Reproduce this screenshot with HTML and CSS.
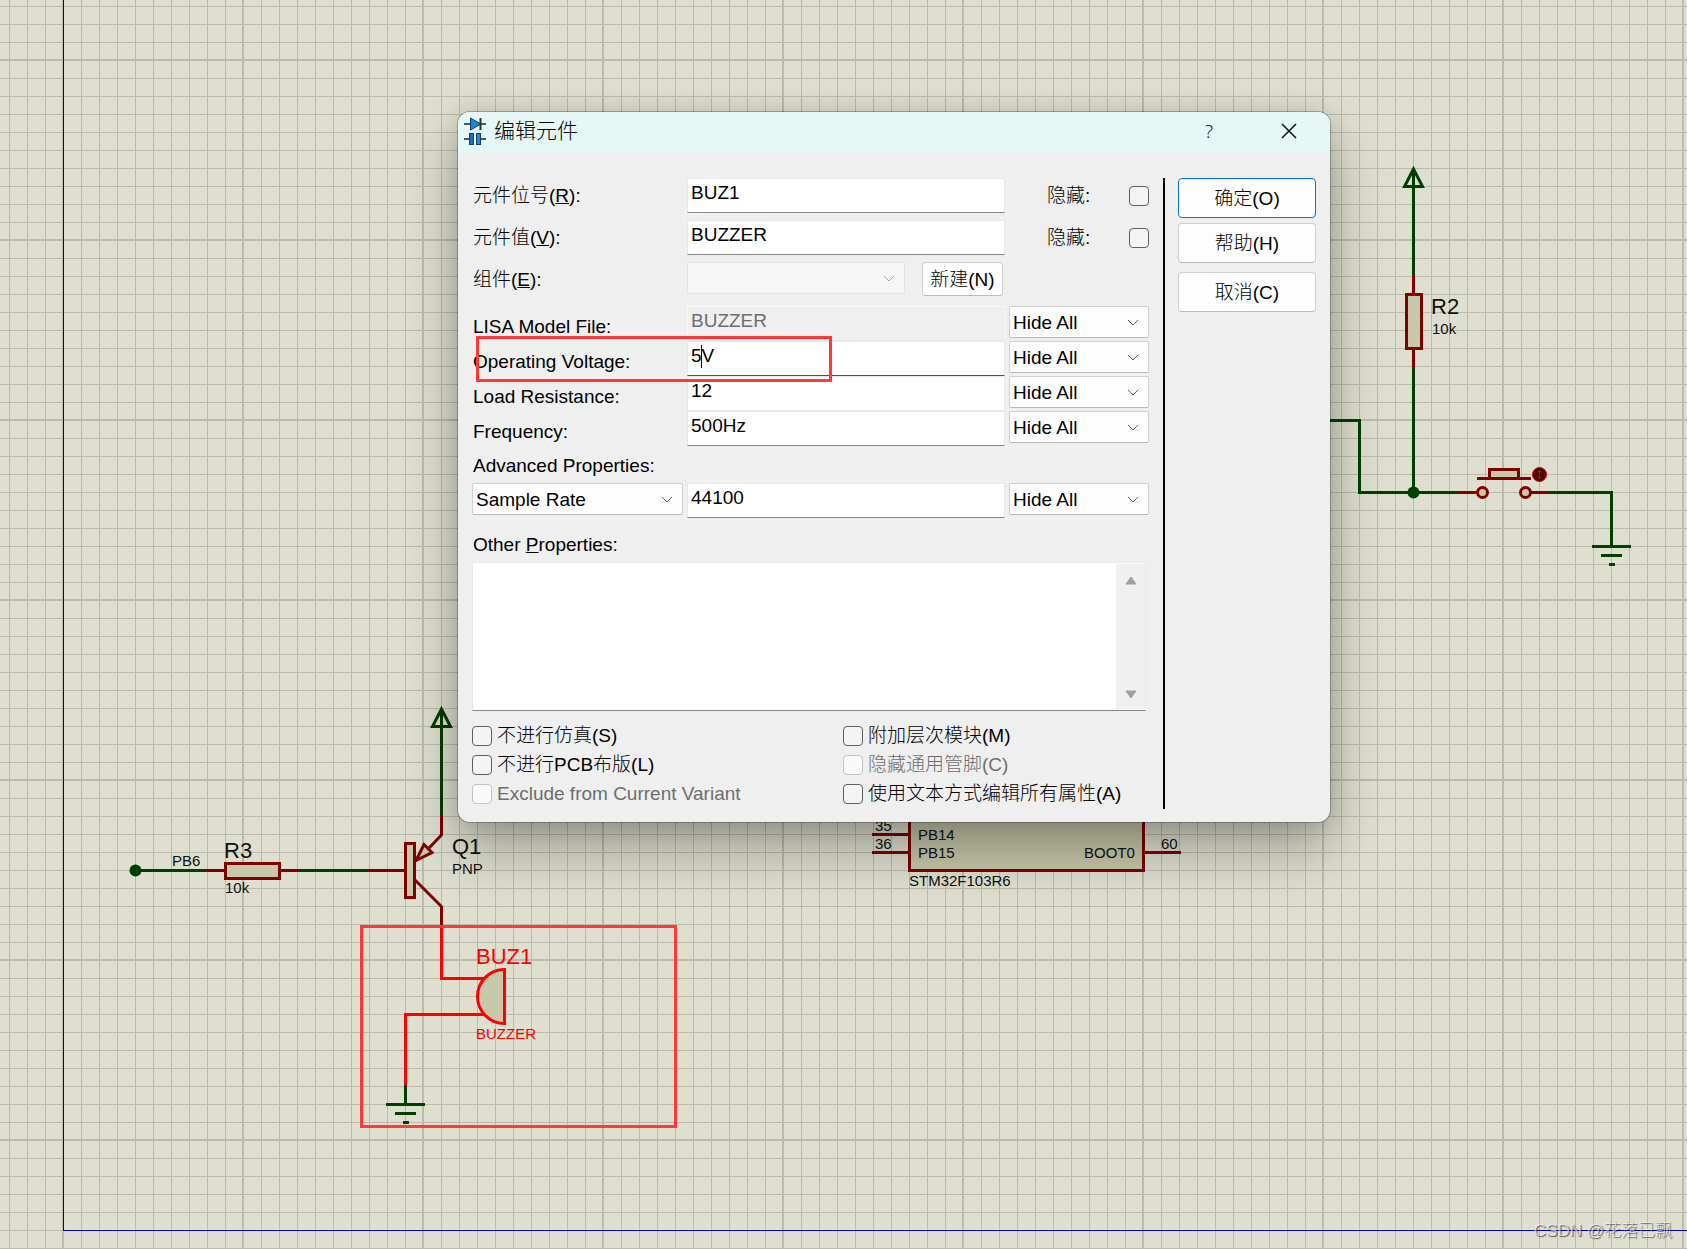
FILE: index.html
```html
<!DOCTYPE html>
<html lang="zh-CN">
<head>
  <meta charset="UTF-8">
  <meta name="viewport" content="width=device-width, initial-scale=1.0">
  <title>编辑元件</title>
  <link rel="stylesheet" href="styles.css">
</head>
<body>
  <main class="canvas">
    <svg class="schematic" width="100%" height="100%">
      <!-- sheet border -->
      <g class="sheet">
        <line x1="63.5" y1="0" x2="63.5" y2="1231"/>
        <line x1="63" y1="1230.5" x2="100%" y2="1230.5"/>
      </g>

      <!-- MCU -->
      <path class="part" d="M909.5 600V870.5H1143.5V600Z"/>
      <path class="pin" d="M872 834.5H909M872 852.5H909M1144 852.5H1181"/>
      <text class="small" x="875" y="831">35</text>
      <text class="small" x="875" y="849">36</text>
      <text class="small" x="918" y="840">PB14</text>
      <text class="small" x="918" y="858">PB15</text>
      <text class="small" x="1084" y="858">BOOT0</text>
      <text class="small" x="1161" y="849">60</text>
      <text class="small" x="909" y="886">STM32F103R6</text>

      <!-- R3 -->
      <path class="wire" d="M135 870.5H206M299 870.5H368"/>
      <path class="pin" d="M206 870.5H225M280 870.5H299M368 870.5H405"/>
      <circle class="node" cx="135.5" cy="870.5" r="6"/>
      <rect class="part" x="225.5" y="863.5" width="54" height="15"/>
      <text class="small" x="172" y="866">PB6</text>
      <text class="big" x="224" y="858">R3</text>
      <text class="small" x="225" y="893">10k</text>

      <!-- Q1 -->
      <path class="wire" d="M441.5 710V815M441.5 709L432.5 726.5H450.5Z"/>
      <path class="pin" d="M441.5 815V835L429 848M415 880L441.5 906.5V926"/>
      <path class="part" d="M416 860.5L424 844.5L432 852.5Z"/>
      <rect class="part" x="405.5" y="843.5" width="9" height="54"/>
      <text class="big" x="452" y="854">Q1</text>
      <text class="small" x="452" y="874">PNP</text>

      <!-- BUZ1 -->
      <path class="selected" d="M441.5 926V978.5H485M485 1014.5H405.5V1085"/>
      <path class="selected body" d="M504.5 969.5A27 27 0 0 0 504.5 1023.5Z"/>
      <path class="wire" d="M405.5 1085V1104.5M386 1104.5H425M395 1113.5H416M403 1122.5H409"/>
      <text class="big hot" x="476" y="964">BUZ1</text>
      <text class="small hot" x="476" y="1039">BUZZER</text>
      <rect class="mark" x="361.5" y="926.5" width="314" height="200"/>

      <!-- R2 -->
      <path class="wire" d="M1320 420.5H1359.5V492.5H1457M1413.5 170V276M1413.5 367V492M1413.5 169L1404.5 186.5H1422.5Z"/>
      <path class="pin" d="M1413.5 275.5V294M1413.5 349V368"/>
      <rect class="part" x="1406.5" y="294.5" width="15" height="54"/>
      <circle class="node" cx="1413.5" cy="492.5" r="6"/>
      <text class="big" x="1431" y="314">R2</text>
      <text class="small" x="1432" y="334">10k</text>

      <!-- push button -->
      <path class="pin" d="M1457 492.5H1478M1530 492.5H1550"/>
      <rect class="part" x="1489.5" y="469.5" width="29" height="9"/>
      <path class="pin" d="M1477 478.5H1531"/>
      <circle class="part" cx="1482.5" cy="492.5" r="5"/>
      <circle class="part" cx="1525.5" cy="492.5" r="5"/>
      <circle class="toggle" cx="1539.5" cy="474.5" r="7"/>
      <path class="toggle" d="M1539.5 470V479M1537.5 472.5L1539.5 470.5L1541.5 472.5M1537.5 476.5L1539.5 478.5L1541.5 476.5"/>
      <path class="wire" d="M1550 492.5H1611.5V546.5M1592 546.5H1631M1601 555.5H1622M1609 564.5H1615"/>
    </svg>

    <section class="dialog" role="dialog" aria-labelledby="dialog-title">
      <header class="titlebar">
        <svg class="app-icon" width="22" height="28" viewBox="0 0 22 28">
          <path d="M0 7H22M0 22H22" stroke="#4a5658" stroke-width="2"/>
          <path d="M6.500 1L17 7L6.500 13Z" fill="#1d82dc" stroke="#153e66"/>
          <path d="M16.500 1V13" stroke="#23373f" stroke-width="2"/>
          <rect x="9" y="16" width="4" height="12" fill="#e5f8f6"/>
          <rect x="5.500" y="16.500" width="4" height="11" fill="#1d6fc0" stroke="#153e66"/>
          <rect x="12.500" y="16.500" width="4" height="11" fill="#2289e0" stroke="#153e66"/>
        </svg>
        <h1 id="dialog-title">编辑元件</h1>
        <button type="button" class="title-btn help">?</button>
        <button type="button" class="title-btn" aria-label="关闭">
          <svg width="16" height="16" viewBox="0 0 16 16"><path d="M1 1L15 15M15 1L1 15" stroke="#111" stroke-width="1.500"/></svg>
        </button>
      </header>

      <form class="content">
        <div class="fields">
          <div class="row spaced">
            <label for="ref">元件位号(<u>R</u>):</label>
            <input id="ref" class="text" type="text" value="BUZ1">
            <label class="hide">隐藏:<input type="checkbox"></label>
          </div>
          <div class="row spaced">
            <label for="value">元件值(<u>V</u>):</label>
            <input id="value" class="text" type="text" value="BUZZER">
            <label class="hide">隐藏:<input type="checkbox"></label>
          </div>
          <div class="row element">
            <label for="element">组件(<u>E</u>):</label>
            <div class="element-pick">
              <select id="element" disabled></select>
              <button type="button">新建(N)</button>
            </div>
          </div>

          <div class="row prop">
            <label for="lisa">LISA Model File:</label>
            <input id="lisa" class="text joined" type="text" value="BUZZER" disabled>
            <select aria-label="LISA Model File"><option>Hide All</option></select>
          </div>
          <div class="row prop">
            <label for="voltage">Operating Voltage:</label>
            <div class="editing">
              <input id="voltage" class="text active" type="text" value="5V">
              <span class="caret"></span>
            </div>
            <select aria-label="Operating Voltage"><option>Hide All</option></select>
          </div>
          <div class="row prop">
            <label for="load">Load Resistance:</label>
            <input id="load" class="text joined" type="text" value="12">
            <select aria-label="Load Resistance"><option>Hide All</option></select>
          </div>
          <div class="row prop">
            <label for="freq">Frequency:</label>
            <input id="freq" class="text" type="text" value="500Hz">
            <select aria-label="Frequency"><option>Hide All</option></select>
          </div>

          <label class="heading" for="advanced">Advanced Properties:</label>
          <div class="row prop">
            <select id="advanced"><option>Sample Rate</option></select>
            <input class="text" type="text" value="44100" aria-label="Sample Rate">
            <select aria-label="Sample Rate"><option>Hide All</option></select>
          </div>

          <label class="heading other" for="other">Other <u>P</u>roperties:</label>
          <div class="memo">
            <textarea id="other"></textarea>
            <div class="scroll">
              <svg width="12" height="9" viewBox="0 0 12 9"><path d="M6 1L11 8H1Z"/></svg>
              <svg width="12" height="9" viewBox="0 0 12 9"><path d="M6 8L11 1H1Z"/></svg>
            </div>
          </div>

          <div class="checks">
            <label><input type="checkbox">不进行仿真(S)</label>
            <label><input type="checkbox">附加层次模块(M)</label>
            <label><input type="checkbox">不进行PCB布版(L)</label>
            <label class="off"><input type="checkbox" disabled>隐藏通用管脚(C)</label>
            <label class="off"><input type="checkbox" disabled>Exclude from Current Variant</label>
            <label><input type="checkbox">使用文本方式编辑所有属性(A)</label>
          </div>
        </div>

        <div class="actions">
          <button type="button" class="default">确定(O)</button>
          <button type="button">帮助(H)</button>
          <button type="button" class="cancel">取消(C)</button>
        </div>
      </form>
      <div class="highlight"></div>
    </section>

    <div class="watermark">CSDN @花落已飘</div>
  </main>
</body>
</html>
```
FILE: styles.css
```css
* {
  margin: 0;
  padding: 0;
  box-sizing: border-box;
}
body {
  font-family: "Liberation Sans", "Noto Sans CJK SC", sans-serif;
  font-size: 19px;
  font-weight: 300;
  color: #000;
}
.canvas {
  position: relative;
  height: 100vh;
  overflow: hidden;
  background-color: #dfdfd0;
  background-image:
    linear-gradient(to right, #bbbbad 1px, transparent 1px),
    linear-gradient(to bottom, #bbbbad 1px, transparent 1px),
    linear-gradient(to right, #bbbbad 1px, transparent 1px),
    linear-gradient(to bottom, #bbbbad 1px, transparent 1px);
  background-size: 18px 18px, 18px 18px, 180px 180px, 180px 180px;
  background-position: 9px 6px, 9px 6px, 62px 59px, 62px 59px;
}

/* schematic */
.schematic {
  position: absolute;
  inset: 0;
  fill: none;
  stroke-width: 3;
}
.sheet {
  stroke: #0000b4;
  stroke-width: 1;
}
.wire {
  stroke: #004000;
}
.pin {
  stroke: #800000;
}
.part {
  stroke: #800000;
  fill: #c8c8aa;
}
.node {
  fill: #004000;
}
.selected {
  stroke: #ff0000;
}
.selected.body {
  fill: #c8c8aa;
}
.toggle {
  stroke: #e00000;
  stroke-width: 1;
  fill: #500000;
}
.mark {
  stroke: #ff3838;
}
.schematic text {
  fill: #101010;
}
.schematic .hot {
  fill: #ff0000;
}
.big {
  font-size: 22px;
}
.small {
  font-size: 15px;
}

/* dialog window */
.dialog {
  position: absolute;
  left: 458px;
  top: 112px;
  width: 872px;
  background: #efefef;
  border-radius: 12px;
  box-shadow: 0 0 0 1px rgba(0, 0, 0, 0.25), 0 2px 24px rgba(0, 0, 0, 0.14), 0 28px 56px rgba(0, 0, 0, 0.3);
}
.titlebar {
  display: flex;
  align-items: center;
  height: 41px;
  padding: 0 5px 3px 6px;
  background: #e5f8f6;
  border-radius: 12px 12px 0 0;
}
.app-icon {
  margin-right: 8px;
}
.titlebar h1 {
  flex: 1;
  font-size: 21px;
  font-weight: 300;
  line-height: 36px;
}
.title-btn {
  display: flex;
  align-items: center;
  justify-content: center;
  width: 72px;
  height: 38px;
  border: none;
  background: none;
}
.title-btn.help {
  width: 88px;
  font: 300 19px "Open Sans", sans-serif;
}

.content {
  display: flex;
  padding: 25px 14px 13px;
}
.fields {
  flex: 1;
  padding-right: 14px;
  margin-right: 13px;
  border-right: 2px solid #000;
}
.row {
  display: grid;
  grid-template-columns: 211px 1fr 140px;
  column-gap: 4px;
  height: 35px;
}
.row > label {
  padding-left: 1px;
  line-height: 35px;
}
.spaced {
  margin-bottom: 7px;
}
.element {
  margin-bottom: 9px;
}
.prop > label {
  line-height: 42px;
}
.text {
  width: 100%;
  height: 35px;
  padding: 0 3px 5px;
  border: 1px solid #e8e8e8;
  border-bottom-color: #868686;
  background: #fff;
  font: inherit;
  color: #000;
}
.text:disabled {
  background: #efefef;
  border-color: #f9f9f9;
  color: #6d6d6d;
}
.text.joined {
  border-bottom-color: #e8e8e8;
}
.text.active {
  border-bottom: 1px solid #0067c0;
}
.editing {
  position: relative;
}
.caret {
  position: absolute;
  left: 14px;
  top: 4px;
  width: 1px;
  height: 23px;
  background: #000;
}
.row > .hide {
  display: flex;
  align-items: center;
  justify-content: space-between;
  padding-left: 38px;
}

select {
  appearance: none;
  height: 32px;
  width: 100%;
  padding: 0 3px;
  border: 1px solid #d0d0d0;
  border-bottom-color: #b8b8b8;
  border-radius: 2px;
  background: #fdfdfd url("data:image/svg+xml,%3Csvg xmlns='http://www.w3.org/2000/svg' width='12' height='7'%3E%3Cpath d='M1 1L6 6L11 1' fill='none' stroke='%23606060'/%3E%3C/svg%3E") no-repeat right 9px center;
  font: inherit;
  color: #000;
}
select:disabled {
  border-color: #dadada;
  opacity: 0.5;
}
.element-pick {
  display: flex;
  align-items: flex-start;
  gap: 17px;
  padding-right: 2px;
}
.element-pick select {
  flex: 1;
}
.element-pick button {
  width: 81px;
  height: 34px;
}

.content button {
  padding-bottom: 3px;
  border: 1px solid #d0d0d0;
  border-bottom-color: #bababa;
  border-radius: 4px;
  background: #fdfdfd;
  font: inherit;
  color: #000;
}
.heading {
  display: block;
  height: 37px;
  padding-left: 1px;
  line-height: 39px;
}
.heading.other {
  height: 44px;
  line-height: 53px;
}
.memo {
  display: flex;
  height: 149px;
  margin: 0 3px 15px 0;
  border: 1px solid #e8e8e8;
  border-bottom-color: #868686;
  background: #fff;
}
.memo textarea {
  flex: 1;
  border: none;
  resize: none;
  font: inherit;
}
.scroll {
  display: flex;
  flex-direction: column;
  align-items: center;
  justify-content: space-between;
  width: 29px;
  margin: 1px 0;
  padding: 12px 0 10px;
  background: #f0f0f0;
}
.scroll path {
  fill: #a0a0a0;
  stroke: #a0a0a0;
  stroke-linejoin: round;
}

.checks {
  display: grid;
  grid-template-columns: 371px 1fr;
  grid-auto-rows: 20px;
  row-gap: 9px;
  margin-bottom: 5px;
}
.checks label {
  display: flex;
  align-items: center;
  gap: 5px;
  line-height: 20px;
}
.checks .off {
  color: #6d6d6d;
}
input[type="checkbox"] {
  appearance: none;
  width: 20px;
  height: 20px;
  border: 1px solid #5f5f5f;
  border-radius: 4px;
  background: #f4f4f4;
}
input[type="checkbox"]:disabled {
  border-color: #c3c3c3;
  background: #f9f9f9;
}

.actions {
  display: flex;
  flex-direction: column;
  gap: 5px;
  width: 138px;
}
.actions button {
  height: 40px;
}
.actions .default {
  border-color: #0078d4;
}
.actions .cancel {
  margin-top: 4px;
}

/* red frame round the edited row */
.highlight {
  position: absolute;
  left: 18px;
  top: 224px;
  width: 356px;
  height: 46px;
  border: 3px solid #ff3838;
  pointer-events: none;
}
.watermark {
  position: absolute;
  right: 15px;
  bottom: 8px;
  font-size: 17px;
  color: rgba(255, 255, 255, 0.6);
  text-shadow: 1px 1px 1px rgba(0, 0, 0, 0.6);
}
```
